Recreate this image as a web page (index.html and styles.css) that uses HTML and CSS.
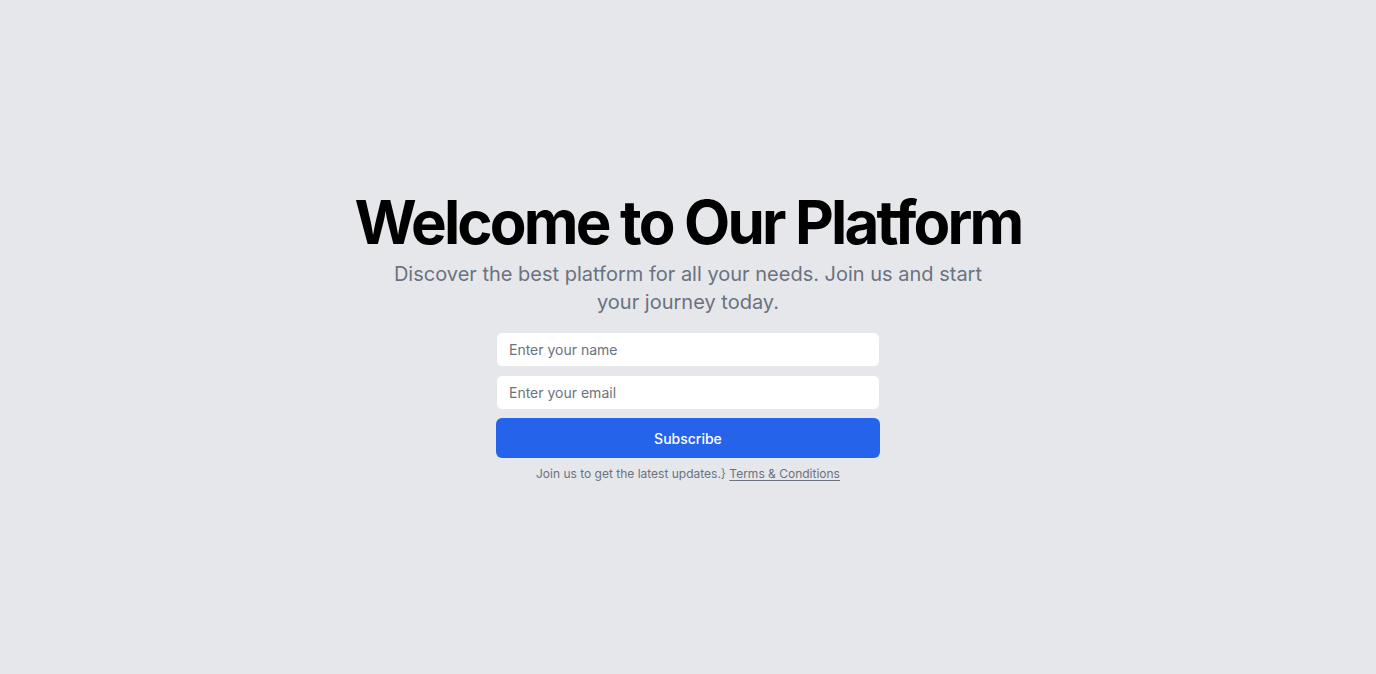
FILE: index.html
```html
<!DOCTYPE html>
<html lang="en">
<head>
<meta charset="utf-8">
<title>Welcome</title>
<link rel="stylesheet" href="styles.css">
</head>
<body>
<main class="page">
  <section class="hero">
    <div class="intro">
      <h1 class="title">Welcome to Our Platform</h1>
      <p class="lead">Discover the best platform for all your needs. Join us and start your journey today.</p>
    </div>
    <form class="form">
      <input class="field" type="text" placeholder="Enter your name">
      <input class="field" type="email" placeholder="Enter your email">
      <button class="btn" type="submit">Subscribe</button>
      <p class="note">Join us to get the latest updates.} <a class="link" href="#">Terms &amp; Conditions</a></p>
    </form>
  </section>
</main>
</body>
</html>
```
FILE: styles.css
```css
* { box-sizing: border-box; }
html, body { margin: 0; padding: 0; }
body {
  background: #e5e7eb;
  font-family: Inter, "Noto Sans", sans-serif;
  color: #000;
}
.page {
  min-height: 100vh;
  display: flex;
  align-items: center;
  justify-content: center;
}
.hero {
  display: flex;
  flex-direction: column;
  align-items: center;
  gap: 16px;
  text-align: center;
}
.intro {
  display: flex;
  flex-direction: column;
  align-items: center;
  gap: 8px;
}
.title {
  margin: 0;
  font-size: 60px;
  line-height: 1;
  font-weight: 700;
  letter-spacing: -0.047em;
  color: #000;
}
.lead {
  margin: 0;
  max-width: 600px;
  font-size: 20px;
  line-height: 28px;
  color: #6b7280;
}
.form {
  width: 384px;
  display: flex;
  flex-direction: column;
  gap: 8px;
}
.field {
  height: 35px;
  width: 100%;
  border: 1px solid #e5e7eb;
  border-radius: 6px;
  background: #fff;
  padding: 0 12px;
  font-family: inherit;
  font-size: 14px;
  color: #111827;
  outline: none;
}
.field::placeholder { color: #6b7280; }
.btn {
  height: 40px;
  width: 100%;
  border: none;
  border-radius: 6px;
  background: #2563eb;
  color: #fff;
  font-family: inherit;
  font-size: 14px;
  font-weight: 500;
  cursor: pointer;
}
.note {
  margin: 0;
  font-size: 12px;
  line-height: 16px;
  color: #6b7280;
}
.link {
  color: #6b7280;
  text-decoration: underline;
  text-underline-offset: 2px;
}
```
